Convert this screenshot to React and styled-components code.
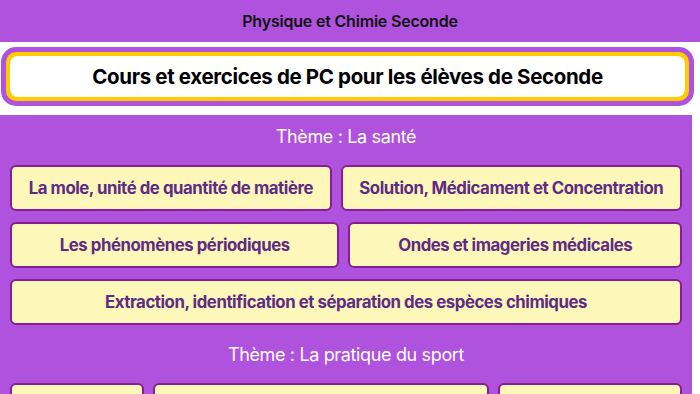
import React from "react";
import styled, { createGlobalStyle } from "styled-components";

const Global = createGlobalStyle`
  html, body { margin: 0; padding: 0; background: #ffffff; }
  body { font-family: Inter, "Noto Sans", "DejaVu Sans", sans-serif; overflow: hidden; }
  * { box-sizing: border-box; }
`;

const Page = styled.div`
  width: 700px;
  height: 394px;
  display: flex;
  flex-direction: column;
  overflow: hidden;
`;

const Header = styled.header`
  height: 42px;
  flex: none;
  background: #af52de;
  display: flex;
  align-items: center;
  justify-content: center;
  font-size: 16px;
  font-weight: 600;
  color: #111;
  letter-spacing: -0.2px;
`;

const TitleRing = styled.div`
  margin: 5px 6px 0 1px;
  height: 59px;
  flex: none;
  border: 5px solid #af52de;
  border-radius: 15px;
  background: #ffcc00;
  padding: 4px;
`;

const TitleBox = styled.div`
  height: 100%;
  background: #fff;
  border-radius: 8px;
  display: flex;
  align-items: center;
  justify-content: center;
  font-size: 20.5px;
  font-weight: 700;
  color: #000;
  letter-spacing: -0.35px;
`;

const Content = styled.main`
  margin: 9px 8px 0 0;
  flex: 1;
  background: #af52de;
  padding: 9px 10px;
  display: flex;
  flex-direction: column;
  gap: 11px;
`;

const Theme = styled.div`
  height: 24px;
  display: flex;
  align-items: center;
  justify-content: center;
  color: #fff;
  font-size: 18px;
  font-weight: 400;
  letter-spacing: -0.35px;
  margin: ${(p) => (p.$first ? "0 0 6px" : "6px 0 6px")};
`;

const Row = styled.div`
  display: flex;
  gap: 9px;
  flex: none;
`;

const Tile = styled.button`
  flex: 1 1 auto;
  height: 46px;
  padding: 0 16px;
  background: #fdf7b9;
  border: 2px solid #8a1d8f;
  border-radius: 6px;
  color: #5e2b85;
  font-family: inherit;
  font-size: 16.8px;
  font-weight: 700;
  letter-spacing: -0.45px;
  white-space: nowrap;
  cursor: pointer;
`;

const sections = [
  {
    title: "Thème : La santé",
    rows: [
      ["La mole, unité de quantité de matière", "Solution, Médicament et Concentration"],
      ["Les phénomènes périodiques", "Ondes et imageries médicales"],
      ["Extraction, identification et séparation des espèces chimiques"],
    ],
  },
  {
    title: "Thème : La pratique du sport",
    rows: [["Vitesses", "Le principe d'inertie et les relations", "Forces et poids"]],
  },
];

export default function App() {
  return (
    <>
      <Global />
      <Page>
        <Header>Physique et Chimie Seconde</Header>
        <TitleRing>
          <TitleBox>Cours et exercices de PC pour les élèves de Seconde</TitleBox>
        </TitleRing>
        <Content>
          {sections.map((s, i) => (
            <React.Fragment key={s.title}>
              <Theme $first={i === 0}>{s.title}</Theme>
              {s.rows.map((r, j) => (
                <Row key={j}>
                  {r.map((t) => (
                    <Tile key={t}>{t}</Tile>
                  ))}
                </Row>
              ))}
            </React.Fragment>
          ))}
        </Content>
      </Page>
    </>
  );
}
